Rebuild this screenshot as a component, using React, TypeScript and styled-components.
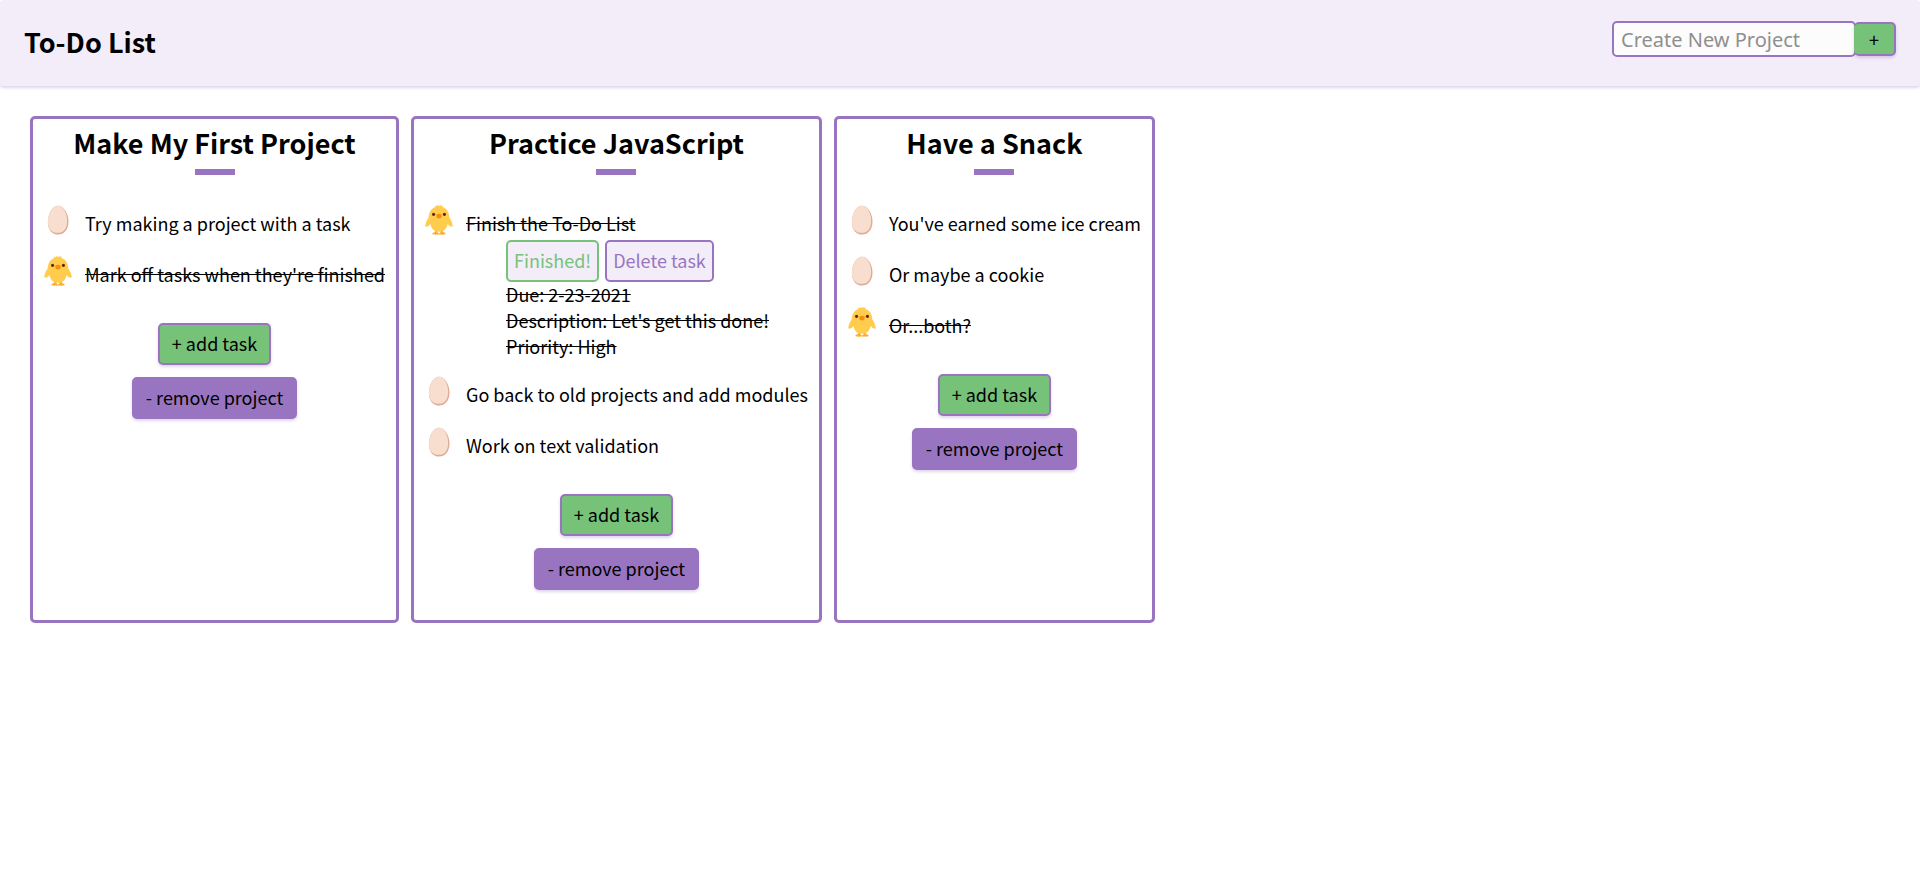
import React from 'react';
import styled, { createGlobalStyle } from 'styled-components';

const purple = '#9975c1';
const green = '#77c279';
const lilac = '#f3edf9';
const shadow = '0 2px 3px rgba(153, 117, 193, 0.3)';

const GlobalStyle = createGlobalStyle`
  * { box-sizing: border-box; }
  body {
    margin: 0;
    background: #fff;
    color: #000;
    font: 18px/26px 'Noto Sans CJK SC', sans-serif;
  }
  button, input { font: inherit; color: inherit; }
  button { cursor: pointer; }
`;

const Header = styled.header`
  display: flex;
  justify-content: space-between;
  align-items: flex-start;
  min-height: 86px;
  padding: 21px 24px;
  border-radius: 4px;
  background: ${lilac};
  box-shadow: ${shadow};
`;

const PageTitle = styled.h1`
  margin: 0;
  font-size: 27px;
  line-height: 42px;
  font-weight: 700;
`;

const ProjectForm = styled.form`
  display: flex;
  align-items: center;
`;

const ProjectInput = styled.input`
  width: 244px;
  height: 36px;
  padding: 0 7px;
  border: 2px solid ${purple};
  border-radius: 5px;
  background: #fcfcfc;
  font-family: 'Noto Sans', sans-serif;
  font-size: 20px;
  &::placeholder { color: #8f8f8f; opacity: 1; }
`;

const CreateButton = styled.button`
  width: 42px;
  height: 34px;
  margin-left: -2px;
  padding: 0;
  border: 2px solid ${purple};
  border-left: 0;
  border-radius: 5px;
  background: ${green};
  box-shadow: ${shadow};
`;

const Board = styled.main`
  display: flex;
  align-items: stretch;
  gap: 12px;
  padding: 30px;
`;

const Card = styled.section`
  display: flex;
  flex-direction: column;
  align-items: center;
  padding: 6px 11px 30px;
  border: 3px solid ${purple};
  border-radius: 5px;
`;

const CardTitle = styled.h2`
  margin: 0;
  font-size: 27px;
  line-height: 36px;
  font-weight: 700;
`;

const Rule = styled.div`
  width: 40px;
  height: 6px;
  margin: 8px 0 34px;
  background: ${purple};
`;

const TaskList = styled.ul`
  display: flex;
  flex-direction: column;
  align-self: stretch;
  gap: 22px;
  margin: 0 0 34px;
  padding: 0;
  list-style: none;
`;

const TaskItem = styled.li`
  display: flex;
  gap: 13px;
`;

const TaskIcon = styled.svg`
  flex: none;
  width: 28px;
  height: 30px;
  margin-top: -4px;
  margin-bottom: -2px;
`;

const TaskText = styled.span<{ $done: boolean }>`
  text-decoration: ${(p) => (p.$done ? 'line-through' : 'none')};
`;

const TaskName = styled.div`
  line-height: 29px;
  white-space: nowrap;
`;

const Details = styled.div`
  margin: 2px 0 -1px;
  padding-left: 40px;
  white-space: nowrap;
`;

const DetailActions = styled.div`
  display: flex;
  gap: 6px;
  margin-bottom: -1px;
`;

const OutlineButton = styled.button<{ $color: string }>`
  height: 42px;
  padding: 0 6px 2px;
  border: 2px solid ${(p) => p.$color};
  border-radius: 5px;
  background: ${lilac};
  color: ${(p) => p.$color};
`;

const SolidButton = styled.button<{ $fill: string }>`
  height: 42px;
  padding: 0 12px 2px;
  border: 2px solid ${purple};
  border-radius: 5px;
  background: ${(p) => p.$fill};
  box-shadow: ${shadow};
`;

const CardActions = styled.div`
  display: flex;
  flex-direction: column;
  align-items: center;
  gap: 12px;
`;

const Egg = () => (
  <TaskIcon viewBox="0 -1 36 38.5" aria-label="To do" role="img">
    <path fill="#e0aa94" d="M31.500 20.500c0 10-5.800 16.500-13.300 16.500S5 31 5 21C5 10.500 10.800 0 18 0s13.500 10 13.500 20.500Z" />
    <path fill="#f7dece" d="M29.700 19.500C29.700 29.500 25 34.800 17.500 34.800S5 30 5 20.500 10.800 0 18 0s11.700 10.500 11.700 19.500Z" />
  </TaskIcon>
);

const Chick = () => (
  <TaskIcon viewBox="0 0 36 38.5" aria-label="Finished" role="img">
    <path
      fill="#ffac33"
      d="M13 32.500h3v2.500l2 1.600-1 1.900-2.200-.8-1.300 1-1.500-1-2 .2-.5-1.800 3.500-1.400Zm7 0h3v2.200l3.500 1.400-.5 1.800-2-.2-1.500 1-1.300-1-2.200.8-1-1.900 2-1.600Z"
    />
    <path
      fill="#ffcc4d"
      d="M31.300 16c-.4-7.500-3.800-12.200-9.300-13.600L23.500.8 20.500 1 20 0l-2 1.200L15.500 0l-.2 1.300-3-.4 1.400 1.500C8.500 4 5.100 8.500 4.700 16 2.300 19.500.5 23.500.3 27.500c2.700.6 5-.8 6.600-3.200C8.300 30.500 12 34.500 18 34.500s9.700-4 11.100-10.200c1.600 2.400 3.900 3.800 6.600 3.200-.2-4-2-8-4.400-11.500Z"
    />
    <circle cx="11" cy="12" r="2" fill="#662113" />
    <circle cx="25" cy="12" r="2" fill="#662113" />
    <ellipse cx="18" cy="14.200" rx="3.500" ry="3" fill="#f4900c" />
  </TaskIcon>
);

interface Task {
  name: string;
  done?: boolean;
  details?: string[];
}

const projects: { title: string; tasks: Task[] }[] = [
  {
    title: 'Make My First Project',
    tasks: [
      { name: 'Try making a project with a task' },
      { name: "Mark off tasks when they're finished", done: true },
    ],
  },
  {
    title: 'Practice JavaScript',
    tasks: [
      {
        name: 'Finish the To-Do List',
        done: true,
        details: ['Due: 2-23-2021', "Description: Let's get this done!", 'Priority: High'],
      },
      { name: 'Go back to old projects and add modules' },
      { name: 'Work on text validation' },
    ],
  },
  {
    title: 'Have a Snack',
    tasks: [
      { name: "You've earned some ice cream" },
      { name: 'Or maybe a cookie' },
      { name: 'Or...both?', done: true },
    ],
  },
];

export default function App() {
  return (
    <>
      <GlobalStyle />
      <Header>
        <PageTitle>To-Do List</PageTitle>
        <ProjectForm onSubmit={(e) => e.preventDefault()}>
          <ProjectInput type="text" placeholder="Create New Project" aria-label="Create New Project" />
          <CreateButton type="submit">+</CreateButton>
        </ProjectForm>
      </Header>
      <Board>
        {projects.map((project) => (
          <Card key={project.title}>
            <CardTitle>{project.title}</CardTitle>
            <Rule />
            <TaskList>
              {project.tasks.map((task) => (
                <TaskItem key={task.name}>
                  {task.done ? <Chick /> : <Egg />}
                  <div>
                    <TaskName>
                      <TaskText $done={!!task.done}>{task.name}</TaskText>
                    </TaskName>
                    {task.details && (
                      <Details>
                        <DetailActions>
                          <OutlineButton type="button" $color={green}>Finished!</OutlineButton>
                          <OutlineButton type="button" $color={purple}>Delete task</OutlineButton>
                        </DetailActions>
                        {task.details.map((line) => (
                          <div key={line}>
                            <TaskText $done={!!task.done}>{line}</TaskText>
                          </div>
                        ))}
                      </Details>
                    )}
                  </div>
                </TaskItem>
              ))}
            </TaskList>
            <CardActions>
              <SolidButton type="button" $fill={green}>+ add task</SolidButton>
              <SolidButton type="button" $fill={purple}>- remove project</SolidButton>
            </CardActions>
          </Card>
        ))}
      </Board>
    </>
  );
}
